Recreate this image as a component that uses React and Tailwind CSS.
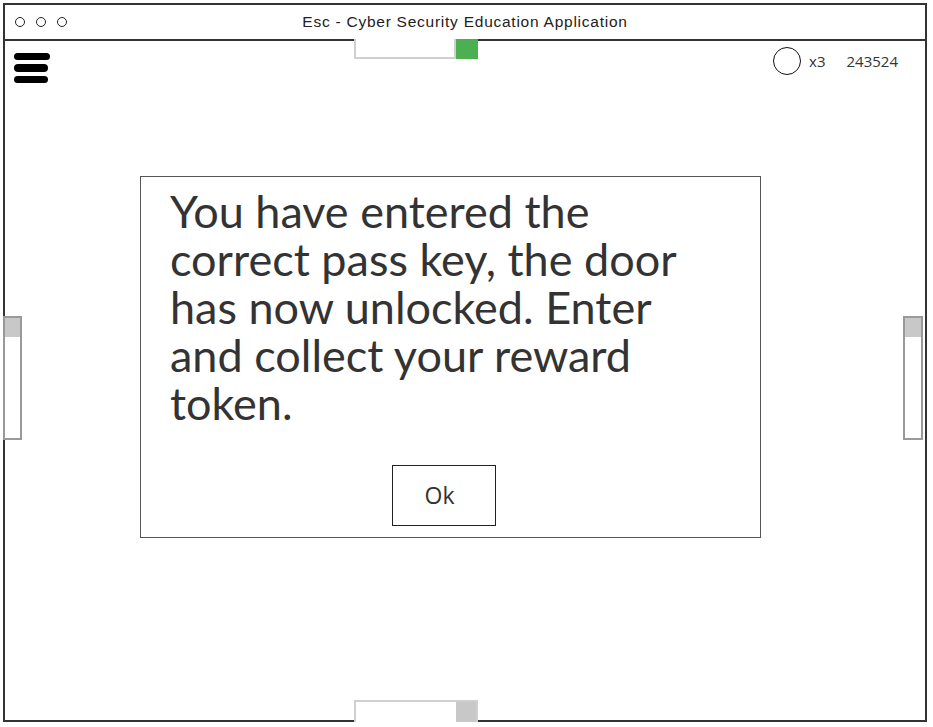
export default function App() {
  return (
    <div className="w-[933px] h-[727px] bg-white relative overflow-hidden" style={{ fontFamily: '"Open Sans", "Liberation Sans", sans-serif' }}>
      <div className="absolute left-[3px] top-[3px] w-[924px] h-[719px] border-2 border-[#333] flex flex-col">
        {/* title bar */}
        <div className="h-[36px] border-b-2 border-[#333] flex items-center relative shrink-0">
          <div className="flex gap-[11px] pl-[10px]">
            <span className="w-[10px] h-[10px] rounded-full border-[1.5px] border-[#222]"></span>
            <span className="w-[10px] h-[10px] rounded-full border-[1.5px] border-[#222]"></span>
            <span className="w-[10px] h-[10px] rounded-full border-[1.5px] border-[#222]"></span>
          </div>
          <div className="absolute left-0 right-0 text-center text-[15.5px] text-[#222] tracking-[0.75px]" style={{ fontFamily: '"Liberation Sans", sans-serif' }}>
            Esc - Cyber Security Education Application
          </div>
        </div>
        {/* content */}
        <div className="flex-1 relative">
          {/* top slider */}
          <div className="absolute left-[349px] top-[-2px] w-[124px] h-[20px] flex">
            <div className="flex-1 border-2 border-t-0 border-[#d0d0d0] bg-white"></div>
            <div className="w-[22px] bg-[#4caf50]"></div>
          </div>
          {/* hamburger */}
          <div className="absolute left-[9px] top-[12px] flex flex-col gap-[4px]">
            <div className="w-[36px] h-[7px] rounded-full bg-black"></div>
            <div className="w-[34px] h-[8px] rounded-full bg-black"></div>
            <div className="w-[34px] h-[7px] rounded-full bg-black"></div>
          </div>
          {/* top right stats */}
          <div className="absolute right-[27px] top-[6px] flex items-center text-[15px] text-[#333]">
            <div className="w-[28px] h-[28px] rounded-full border-[1.5px] border-[#111]"></div>
            <span className="ml-[8px]">x3</span>
            <span className="ml-[21px]">243524</span>
          </div>
          {/* left scrollbar */}
          <div className="absolute left-[-2px] top-[275px] w-[19px] h-[124px] border-2 border-[#999] bg-white">
            <div className="h-[19px] bg-[#c8c8c8]"></div>
          </div>
          {/* right scrollbar */}
          <div className="absolute left-[898px] top-[275px] w-[20px] h-[124px] border-2 border-[#999] bg-white">
            <div className="h-[19px] bg-[#c8c8c8]"></div>
          </div>
          {/* bottom slider */}
          <div className="absolute left-[349px] bottom-[-2px] w-[124px] h-[22px] flex border-2 border-b-0 border-[#d0d0d0]">
            <div className="flex-1 bg-white"></div>
            <div className="w-[20px] bg-[#c8c8c8]"></div>
          </div>
          {/* dialog */}
          <div className="pt-[135px] pl-[135px]">
            <div className="w-[621px] h-[362px] border-[1.5px] border-[#555] bg-white flex flex-col">
              <p className="pl-[29px] pt-[10px] w-[550px] text-[45px] leading-[48px] text-[#333]" style={{ fontFamily: 'Lato, "Open Sans", sans-serif' }}>
                You have entered the correct pass key, the door has now unlocked. Enter and collect your reward token.
              </p>
              <div className="flex justify-center mt-[38px] pr-[14px]">
                <button className="w-[104px] h-[61px] border-[1.5px] border-[#222] text-[23px] text-[#333] flex items-center justify-center pr-[8px]" style={{ fontFamily: '"Open Sans", sans-serif' }}>
                  Ok
                </button>
              </div>
            </div>
          </div>
        </div>
      </div>
    </div>
  );
}
